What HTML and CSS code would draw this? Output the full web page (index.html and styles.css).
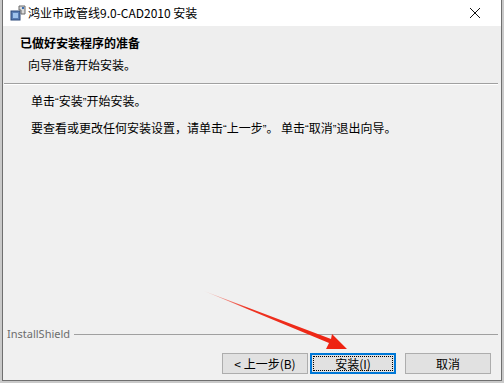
FILE: index.html
```html
<!DOCTYPE html>
<html lang="zh-CN">
  <head>
    <meta charset="UTF-8" />
    <title>鸿业市政管线9.0-CAD2010 安装</title>
    <link rel="stylesheet" href="styles.css">
  </head>
  <body>
    <div class="window">
      <!-- Title bar -->
      <div class="titlebar">
        <svg class="app-icon" width="16" height="16" viewBox="0 0 16 16">
          <rect x="1" y="6" width="9" height="9" fill="#5a7fb5" stroke="#2d4a7a" stroke-width="1" />
          <rect x="3" y="8" width="5" height="5" fill="#9fc3ec" />
          <path d="M9 1 L15 1 L15 9 L11 9 L11 5 L9 5 Z" fill="#d9d9d9" stroke="#6b6b6b" stroke-width="1" />
          <rect x="12" y="2" width="2" height="2" fill="#3c6fb0" />
        </svg>
        <span class="title">鸿业市政管线9.0-CAD2010 安装</span>
        <span class="close">
          <svg width="12" height="12" viewBox="0 0 12 12">
            <path d="M1 1 L11 11 M11 1 L1 11" stroke="#111" stroke-width="1" />
          </svg>
        </span>
      </div>

      <!-- Header -->
      <div class="header">
        <h1>已做好安装程序的准备</h1>
        <p>向导准备开始安装。</p>
      </div>
      <div class="divider"></div>

      <!-- Body -->
      <div class="content">
        <p>单击<span class="q">“</span>安装<span class="q">”</span>开始安装。</p>
        <p>要查看或更改任何安装设置，请单击<span class="q">“</span>上一步<span class="q">”</span>。 单击<span class="q">“</span>取消<span class="q">”</span>退出向导。</p>
      </div>

      <!-- Footer -->
      <div class="footer">
        <div class="brand">
          <span>InstallShield</span>
          <div class="brand-line"></div>
        </div>
        <div class="buttons">
          <button class="btn">&lt; 上一步(<u>B</u>)</button>
          <button class="btn btn-default"><span class="focus">安装(<u>I</u>)</span></button>
          <button class="btn btn-cancel">取消</button>
        </div>
      </div>
    </div>

    <!-- red annotation arrow -->
    <svg class="arrow" width="504" height="383" viewBox="0 0 504 383">
      <defs>
        <linearGradient id="fade" x1="205" y1="292" x2="345" y2="348" gradientUnits="userSpaceOnUse">
          <stop offset="0" stop-color="#f04a3a" stop-opacity="0.2" />
          <stop offset="0.3" stop-color="#ee3322" />
          <stop offset="1" stop-color="#ee2211" />
        </linearGradient>
      </defs>
      <polygon points="204,291 331,339 332,334 347,349 326,349 329,343" fill="url(#fade)" />
    </svg>
  </body>
</html>
```

FILE: styles.css
```css
body {
  margin: 0;
  padding: 0;
  width: 504px;
  height: 383px;
  overflow: hidden;
  background-color: #c9c9c9;
  font-family: "Noto Sans CJK SC", "Microsoft YaHei", sans-serif;
  font-size: 12px;
  color: #000;
}
.window {
  margin-left: 2px;
  width: 498px;
  height: 380px;
  border: 1px solid #6f6f6f;
  border-top: none;
  background-color: #f0f0f0;
  display: flex;
  flex-direction: column;
}
.titlebar {
  height: 26px;
  background-color: #fff;
  display: flex;
  align-items: center;
  padding-left: 7px;
}
.app-icon {
  margin-right: 2px;
}
.title {
  flex: 1;
  font-size: 12px;
  line-height: 16px;
}
.close {
  width: 46px;
  display: flex;
  justify-content: center;
  margin-right: 3px;
}
.header {
  height: 57px;
  background-color: #eeeeee;
  padding-left: 17px;
  box-sizing: border-box;
  padding-top: 8px;
}
.header h1 {
  margin: 0;
  font-size: 12px;
  font-weight: bold;
  line-height: 17px;
}
.header p {
  margin: 5px 0 0 8px;
  line-height: 17px;
}
.divider {
  margin: 0 3px 0 1px;
  height: 1px;
  background-color: #a0a0a0;
  border-bottom: 1px solid #fff;
}
.content {
  flex: 1;
  padding: 7px 0 0 28px;
}
.content p {
  margin: 0 0 8px;
  line-height: 17px;
}
.q {
  font-family: "Liberation Sans", sans-serif;
  font-size: 11px;
}
.footer {
  height: 53px;
}
.brand {
  display: flex;
  align-items: center;
  padding-left: 4px;
  color: #6d6d6d;
  font-family: "Noto Sans", "Segoe UI", sans-serif;
  font-size: 11px;
  line-height: 14px;
}
.brand-line {
  flex: 1;
  height: 1px;
  margin: 1px 3px 0 4px;
  background-color: #a0a0a0;
}
.buttons {
  display: flex;
  padding-left: 219px;
  margin-top: 12px;
}
.btn {
  width: 86px;
  height: 21px;
  padding: 0;
  margin: 0;
  background-color: #e1e1e1;
  border: 1px solid #adadad;
  font-family: "Noto Sans CJK SC", sans-serif;
  font-size: 12px;
  line-height: 17px;
  color: #000;
  display: flex;
  align-items: center;
  justify-content: center;
}
.btn u {
  text-decoration: none;
}
.btn-default {
  margin-left: 2px;
  border: 2px solid #0078d7;
  padding: 1px;
}
.focus {
  flex: 1;
  height: 100%;
  box-sizing: border-box;
  border: 1px dotted #000;
  display: flex;
  align-items: center;
  justify-content: center;
}
.btn-cancel {
  margin-left: 9px;
}
.arrow {
  position: absolute;
  left: 0;
  top: 0;
  pointer-events: none;
}
```
